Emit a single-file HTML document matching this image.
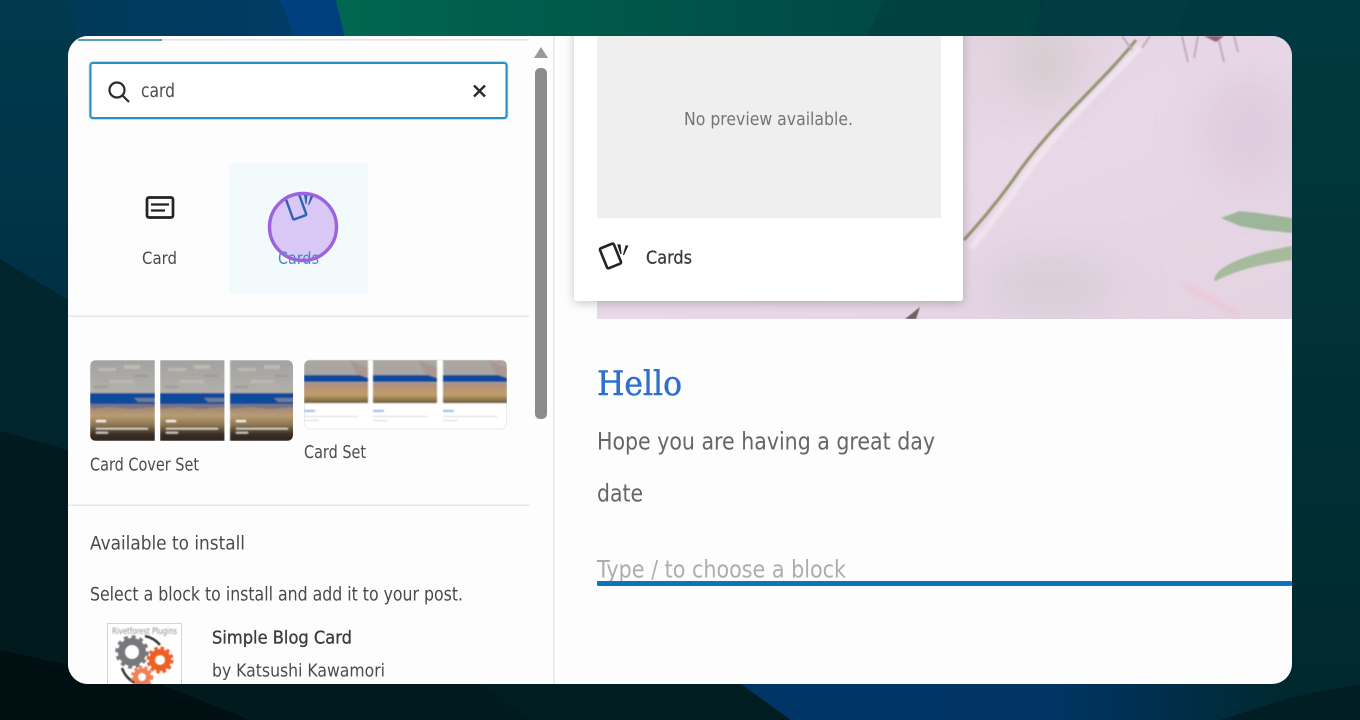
<!DOCTYPE html>
<html lang="en"><head><meta charset="utf-8"><title>Block inserter</title>
<style>
html,body{margin:0;padding:0;background:#001a1e;width:1360px;height:720px;overflow:hidden}
svg{display:block}
text{font-family:"DejaVu Sans","Liberation Sans",sans-serif;fill:#444}
.s{font-family:"DejaVu Serif","Liberation Serif",serif}
</style></head><body>
<svg width="1360" height="720" viewBox="0 0 1360 720" xmlns="http://www.w3.org/2000/svg">
<defs>
<linearGradient id="bgL" x1="0" y1="0" x2="0" y2="1"><stop offset="0" stop-color="#003a4c"/><stop offset="1" stop-color="#003044"/></linearGradient>
<linearGradient id="green" x1="0" y1="0" x2="1" y2="0"><stop offset="0" stop-color="#00674f"/><stop offset="1" stop-color="#004845"/></linearGradient>
<linearGradient id="blueB" x1="0" y1="0" x2="1" y2="0"><stop offset="0" stop-color="#003568"/><stop offset=".55" stop-color="#003566"/><stop offset="1" stop-color="#00282e"/></linearGradient>
<linearGradient id="blueT" x1="0" y1="0" x2="1" y2="0"><stop offset="0" stop-color="#003a58"/><stop offset="1" stop-color="#003c68"/></linearGradient>
<linearGradient id="right" x1="0" y1="0" x2="0" y2="1"><stop offset="0" stop-color="#003a40"/><stop offset="1" stop-color="#00282e"/></linearGradient>
<linearGradient id="pink" x1="0" y1="0" x2="1" y2="1"><stop offset="0" stop-color="#dccfd8"/><stop offset=".5" stop-color="#e8d8e8"/><stop offset="1" stop-color="#e4d4e2"/></linearGradient>
<linearGradient id="sky" x1="0" y1="0" x2="0" y2="1"><stop offset="0" stop-color="#a2a2a0"/><stop offset=".5" stop-color="#b6b3ac"/><stop offset="1" stop-color="#a8a4a0"/></linearGradient>
<linearGradient id="land" x1="0" y1="0" x2="0" y2="1"><stop offset="0" stop-color="#9c8478"/><stop offset=".28" stop-color="#b89c72"/><stop offset=".55" stop-color="#8a7450"/><stop offset=".8" stop-color="#3a3026"/><stop offset="1" stop-color="#2a231c"/></linearGradient>
<linearGradient id="land2" x1="0" y1="0" x2="0" y2="1"><stop offset="0" stop-color="#ad8f80"/><stop offset=".6" stop-color="#c09c68"/><stop offset="1" stop-color="#6a5c3e"/></linearGradient>
<clipPath id="panel"><rect x="68" y="36" width="1224" height="648" rx="20"/></clipPath>
<clipPath id="hero"><rect x="597" y="36" width="695" height="283"/></clipPath>
<clipPath id="cv"><rect x="90" y="360" width="203" height="81" rx="6"/></clipPath>
<clipPath id="cs"><rect x="304" y="360" width="203" height="69" rx="6"/></clipPath>
<filter id="b1" x="-10%" y="-10%" width="120%" height="120%"><feGaussianBlur stdDeviation=".4"/></filter>
<filter id="t" x="-5%" y="-20%" width="110%" height="140%"><feGaussianBlur stdDeviation=".35"/></filter>
<filter id="b3" x="-10%" y="-10%" width="120%" height="120%"><feGaussianBlur stdDeviation=".9"/></filter>
<filter id="st" x="-10%" y="-10%" width="120%" height="120%"><feGaussianBlur stdDeviation=".8"/></filter>
<filter id="hl" x="-10%" y="-10%" width="120%" height="120%"><feGaussianBlur stdDeviation="1.800"/></filter>
<filter id="b2" x="-30%" y="-30%" width="160%" height="160%"><feGaussianBlur stdDeviation="3"/></filter>
<filter id="b8" x="-100%" y="-100%" width="300%" height="300%"><feGaussianBlur stdDeviation="24"/></filter>
<filter id="sh" x="-10%" y="-10%" width="120%" height="120%"><feDropShadow dx="0" dy="2" stdDeviation="5" flood-color="#000" flood-opacity=".22"/></filter>
<g id="cover">
<rect width="65" height="81" fill="url(#sky)"/>
<path d="M8 8h18v3H8zM34 5h16v4H34zM20 20h24v3H20z" fill="#bcbab4"/>
<path d="M4 26h14v2H4zM44 15h14v2H44z" fill="#9c9a98"/>
<rect y="46" width="65" height="35" fill="url(#land)"/>
<rect y="33" width="65" height="11" fill="#0a4a9c"/>
<path d="M0 44h65v3L40 49L20 47L0 49Z" fill="#7a7482"/>
<path d="M44 38h21v4H48Z" fill="#6d7d98"/>
<rect x="6" y="60" width="10" height="2.200" fill="#f6f2e4"/>
<rect x="6" y="68" width="52" height="1.400" fill="#e4e0d6"/>
<rect x="6" y="72" width="12" height="1.400" fill="#e4e0d6"/>
</g>
<g id="set">
<rect width="64" height="43" fill="#a9a6a2"/>
<rect y="23" width="64" height="20" fill="url(#land2)"/>
<rect y="15" width="64" height="7" fill="#0a4a9c"/>
<path d="M46 0L64 8V18L52 14Z" fill="#a89890"/>
<rect x="0" y="50" width="11" height="1.800" fill="#8cb2ea"/>
<rect x="0" y="56" width="54" height="1" fill="#d8d8dc"/>
<rect x="0" y="60" width="15" height="1" fill="#d8d8dc"/>
</g>
</defs>

<!-- background -->
<rect width="1360" height="720" fill="#00262e"/>
<rect x="0" y="0" width="1360" height="300" fill="url(#bgL)"/>
<path d="M68 0H285L340 130H100Z" fill="url(#blueT)"/>
<path d="M280 0H338L356 60H304Z" fill="#00407f"/>
<path d="M336 0H890L860 60H350Z" fill="url(#green)"/>
<path d="M885 0H1050L1020 60H855Z" fill="#00423f"/>
<path d="M1040 0H1360V720H1040Z" fill="url(#right)"/>
<path d="M1045 0H1190L1170 50H1025Z" fill="#003c41"/>
<path d="M0 259L68 300L700 420V720H0Z" fill="#00252d"/>
<path d="M0 431L68 450L700 560V720H0Z" fill="#001a1e"/>
<path d="M0 650L68 665L160 684L250 720H0Z" fill="#000f12"/>
<path d="M480 684H741L791 720H530Z" fill="#001e22"/>
<path d="M741 684H1290V720H791Z" fill="url(#blueB)"/>
<path d="M1220 720L1292 697L1360 684V720Z" fill="#001e24"/>

<!-- panel -->
<g clip-path="url(#panel)">
<rect x="68" y="36" width="1224" height="648" fill="#fdfdfd"/>

<!-- hero image -->
<g clip-path="url(#hero)">
<rect x="597" y="36" width="695" height="283" fill="url(#pink)"/>
<ellipse cx="1045" cy="65" rx="30" ry="34" fill="#c8c4bc" opacity=".75" filter="url(#b8)"/>
<ellipse cx="1250" cy="130" rx="45" ry="55" fill="#d8c2d6" opacity=".6" filter="url(#b8)"/>
<ellipse cx="1050" cy="285" rx="70" ry="24" fill="#cfc8d0" opacity=".8" filter="url(#b8)"/>
<path d="M1138 42C1100 85 1052 125 1015 182C997 208 982 226 968 244" fill="none" stroke="#f4ecf2" stroke-width="5" opacity=".8" transform="translate(3 4)" filter="url(#hl)"/>
<g filter="url(#st)">
<path d="M1136 40C1100 85 1050 125 1013 180C995 205 980 222 964 240" fill="none" stroke="#94926e" stroke-width="3"/>
<path d="M1122 36L1132 50M1150 36L1142 48M1182 36L1188 62M1198 36L1194 58M1218 36L1224 62M1234 36L1238 52" stroke="#c0aabc" stroke-width="2" fill="none"/>
<path d="M1204 36h20l-8 6z" fill="#8c6474"/>
<path d="M1221 218L1240 211L1265 214L1292 218V233L1262 230L1240 226Z" fill="#9db69a"/>
<path d="M1214 280C1216 264 1255 252 1292 246V260C1262 264 1236 270 1216 281Z" fill="#a6bb9c"/>
</g>
<path d="M1183 284L1240 316" stroke="#ecc8da" stroke-width="7" fill="none" filter="url(#b2)"/>
<path d="M905 319L920 307L916 319Z" fill="#6a6462" filter="url(#b1)"/>
</g>

<!-- popup -->
<rect x="574" y="20" width="389" height="281" rx="3" fill="#fff" filter="url(#sh)"/>
<rect x="597" y="30" width="344" height="188" fill="#efefef"/>
<text x="684" y="125" font-size="17.500" style="fill:#747474" textLength="169" lengthAdjust="spacingAndGlyphs" filter="url(#t)">No preview available.</text>
<g fill="none" stroke="#222" filter="url(#t)">
<rect x="603" y="245.200" width="15" height="21.500" rx="1.500" stroke-width="2.600" transform="rotate(-22 610.500 256)"/>
<path d="M618 245L621 254L620 245ZM626 246L623.500 255L627.500 246Z" fill="#222" stroke-width="1.200"/>
</g>
<text x="646" y="263.500" font-size="18" stroke="#3a3a3a" stroke-width=".3" style="fill:#3a3a3a" textLength="46" lengthAdjust="spacingAndGlyphs" filter="url(#t)">Cards</text>

<!-- editor content -->
<text class="s" x="597" y="395" font-size="34" stroke="#2f6fd0" stroke-width=".5" style="fill:#2f6fd0" textLength="85" lengthAdjust="spacingAndGlyphs" filter="url(#t)">Hello</text>
<text x="597" y="449.500" font-size="24" style="fill:#666" textLength="338" lengthAdjust="spacingAndGlyphs" filter="url(#t)">Hope you are having a great day</text>
<text x="597" y="501.500" font-size="24" style="fill:#666" textLength="46" lengthAdjust="spacingAndGlyphs" filter="url(#t)">date</text>
<text x="597" y="577.500" font-size="24" style="fill:#adadad" textLength="249" lengthAdjust="spacingAndGlyphs" filter="url(#t)">Type / to choose a block</text>
<rect x="597" y="581" width="695" height="5" rx="1.500" fill="#0a74bc"/>

<!-- sidebar -->
<rect x="68" y="36" width="485" height="648" fill="#fdfdfd"/>
<rect x="553" y="36" width="1.500" height="648" fill="#e9e9e9"/>
<rect x="78" y="39" width="451" height="1.500" fill="#e4e4e4"/>
<rect x="78" y="39" width="84" height="2" fill="#5b9fb4"/>

<!-- scrollbar -->
<path d="M541 47L548 58H534Z" fill="#9a9a9a"/>
<rect x="535" y="68" width="12" height="351" rx="5" fill="#8c8c8c"/>

<!-- search -->
<rect x="90" y="62.500" width="417" height="56" rx="3" fill="none" stroke="#a8d4ea" stroke-width="2.500"/>
<rect x="90.500" y="63" width="416" height="55" rx="2.500" fill="#fff" stroke="#2a8fc0" stroke-width="2"/>
<g fill="none" stroke="#2c2c2c" stroke-width="2.200" filter="url(#t)">
<circle cx="117" cy="90" r="7.500"/><path d="M122.500 95.500L129 102"/>
<path d="M474 85.500L485 96.500M485 85.500L474 96.500" stroke-width="2.400"/>
</g>
<text x="141" y="97" font-size="18.500" style="fill:#4c4c4c" textLength="34" lengthAdjust="spacingAndGlyphs" filter="url(#t)">card</text>

<!-- block tiles -->
<rect x="229" y="163" width="139" height="131" fill="#f2fafc"/>
<g filter="url(#t)" fill="none" stroke="#222">
<rect x="147" y="197.500" width="26" height="20" rx="2" stroke-width="2.700"/>
<path d="M151 204.500H169M151 210.500H165" stroke-width="2.300"/>
</g>
<text x="142" y="264" font-size="17" style="fill:#4c4c4c" textLength="35" lengthAdjust="spacingAndGlyphs" filter="url(#t)">Card</text>
<circle cx="303" cy="227" r="33.500" fill="#d9c8f5"/>
<text x="278" y="264" font-size="17" style="fill:#4a8db8" textLength="41" lengthAdjust="spacingAndGlyphs" filter="url(#t)">Cards</text>
<g fill="none" stroke="#2d62b4" filter="url(#t)">
<rect x="289" y="195" width="14" height="23" rx="1" stroke-width="2.400" transform="rotate(-20 296 206.500)"/>
<path d="M304.500 195L306 204L307 195ZM311 196L308.500 205L313 196Z" fill="#2d62b4" stroke-width="1"/>
</g>
<circle cx="303" cy="227" r="33.500" fill="none" stroke="#9d62df" stroke-width="3.400"/>

<rect x="68" y="315.500" width="461" height="1.500" fill="#e6e6e6"/>

<!-- pattern thumbs -->
<g clip-path="url(#cv)"><g filter="url(#b3)">
<use href="#cover" x="90" y="360"/><use href="#cover" x="160" y="360"/><use href="#cover" x="230" y="360"/>
</g><rect x="155" y="360" width="5" height="81" fill="#fdfdfd"/><rect x="224.500" y="360" width="5" height="81" fill="#fdfdfd"/></g>
<rect x="304.500" y="360" width="202" height="69" rx="6" fill="#fff" stroke="#ececec"/>
<g clip-path="url(#cs)"><g filter="url(#b3)">
<use href="#set" x="304" y="360"/><use href="#set" x="373" y="360"/><use href="#set" x="443" y="360"/>
</g></g>
<text x="90" y="470.500" font-size="17.500" style="fill:#4c4c4c" textLength="109" lengthAdjust="spacingAndGlyphs" filter="url(#t)">Card Cover Set</text>
<text x="304" y="458" font-size="17.500" style="fill:#4c4c4c" textLength="62" lengthAdjust="spacingAndGlyphs" filter="url(#t)">Card Set</text>

<rect x="68" y="504.500" width="461" height="1.500" fill="#e6e6e6"/>

<text x="90" y="549.500" font-size="18.500" style="fill:#4c4c4c" textLength="155" lengthAdjust="spacingAndGlyphs" filter="url(#t)">Available to install</text>
<text x="90" y="600.500" font-size="18.500" style="fill:#484848" textLength="373" lengthAdjust="spacingAndGlyphs" filter="url(#t)">Select a block to install and add it to your post.</text>

<!-- plugin -->
<rect x="107.500" y="623.500" width="74" height="70" fill="#fff" stroke="#d4d4d4"/>
<g filter="url(#b1)">
<text x="112" y="634" font-size="8.500" style="fill:#8a8a8a" textLength="65" lengthAdjust="spacingAndGlyphs">Rivetforest Plugins</text>
<path d="M145 636A27 27 0 0 1 160 645M122 668A27 27 0 0 0 135 683" fill="none" stroke="#333" stroke-width="2.500"/>
<circle cx="132" cy="652" r="10.500" fill="none" stroke="#77777b" stroke-width="7"/>
<circle cx="132" cy="652" r="15" fill="none" stroke="#77777b" stroke-width="3.500" stroke-dasharray="4 3.800"/>
<circle cx="160" cy="660" r="8" fill="none" stroke="#ee5f28" stroke-width="6"/>
<circle cx="160" cy="660" r="12" fill="none" stroke="#ee5f28" stroke-width="3" stroke-dasharray="3.500 2.800"/>
<circle cx="142" cy="677" r="6.500" fill="none" stroke="#f08058" stroke-width="5"/>
<circle cx="142" cy="677" r="10" fill="none" stroke="#f08058" stroke-width="2.500" stroke-dasharray="3 2.500"/>
</g>
<text x="212" y="643.500" font-size="18" stroke="#3c3c3c" stroke-width=".35" style="fill:#3c3c3c" textLength="140" lengthAdjust="spacingAndGlyphs" filter="url(#t)">Simple Blog Card</text>
<text x="212" y="676.500" font-size="18" style="fill:#4c4c4c" textLength="173" lengthAdjust="spacingAndGlyphs" filter="url(#t)">by Katsushi Kawamori</text>
</g>
</svg>
</body></html>
